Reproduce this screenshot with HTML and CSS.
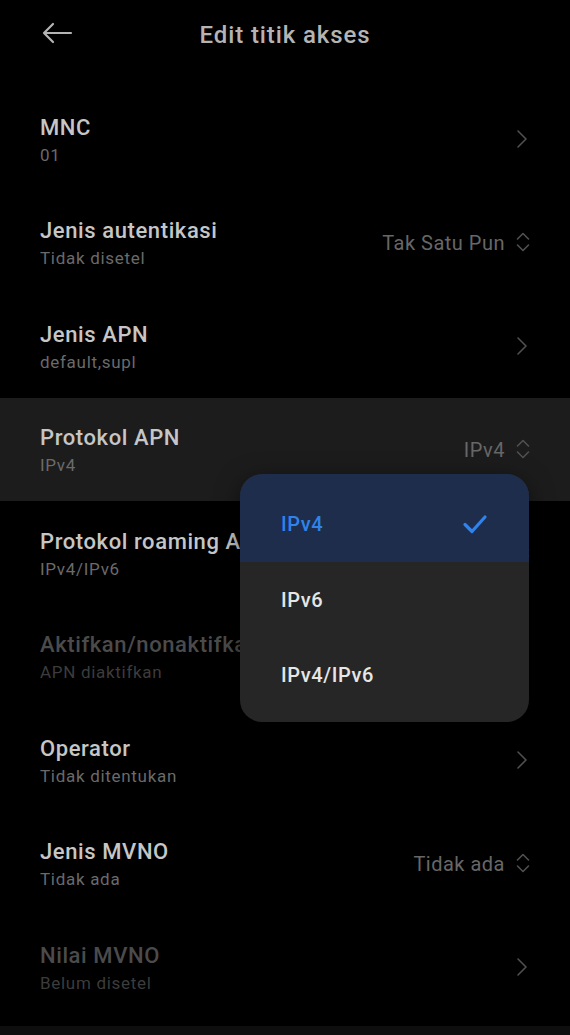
FILE: index.html
```html
<!DOCTYPE html>
<html lang="id">
<head>
    <meta charset="UTF-8">
    <meta name="viewport" content="width=device-width, initial-scale=1.0">
    <title>Edit titik akses</title>
    <link rel="stylesheet" href="styles.css">
</head>
<body>
    <div class="screen">
        <header class="topbar">
            <button class="back" aria-label="Kembali">
                <svg width="32" height="22" viewBox="0 0 32 22">
                    <path d="M30 11H3M12 2L3 11l9 9" fill="none" stroke="currentColor" stroke-width="2.2" stroke-linecap="round" stroke-linejoin="round"/>
                </svg>
            </button>
            <h1>Edit titik akses</h1>
        </header>

        <ul class="prefs">
            <li class="pref">
                <div class="pref-text">
                    <span class="pref-title">MNC</span>
                    <span class="pref-summary">01</span>
                </div>
                <svg class="chevron" width="12" height="22" viewBox="0 0 12 22"><path d="M2 3l8 8-8 8" /></svg>
            </li>
            <li class="pref">
                <div class="pref-text">
                    <span class="pref-title">Jenis autentikasi</span>
                    <span class="pref-summary">Tidak disetel</span>
                </div>
                <span class="pref-value">Tak Satu Pun</span>
                <svg class="updown" width="14" height="24" viewBox="0 0 14 24"><path d="M1.5 9L7 3.5 12.5 9M1.5 15L7 20.5 12.5 15" /></svg>
            </li>
            <li class="pref">
                <div class="pref-text">
                    <span class="pref-title">Jenis APN</span>
                    <span class="pref-summary">default,supl</span>
                </div>
                <svg class="chevron" width="12" height="22" viewBox="0 0 12 22"><path d="M2 3l8 8-8 8" /></svg>
            </li>
            <li class="pref pref--active">
                <div class="pref-text">
                    <span class="pref-title">Protokol APN</span>
                    <span class="pref-summary">IPv4</span>
                </div>
                <span class="pref-value">IPv4</span>
                <svg class="updown" width="14" height="24" viewBox="0 0 14 24"><path d="M1.5 9L7 3.5 12.5 9M1.5 15L7 20.5 12.5 15" /></svg>
            </li>
            <li class="pref">
                <div class="pref-text">
                    <span class="pref-title">Protokol roaming APN</span>
                    <span class="pref-summary">IPv4/IPv6</span>
                </div>
                <span class="pref-value">IPv4/IPv6</span>
                <svg class="updown" width="14" height="24" viewBox="0 0 14 24"><path d="M1.5 9L7 3.5 12.5 9M1.5 15L7 20.5 12.5 15" /></svg>
            </li>
            <li class="pref pref--disabled">
                <div class="pref-text">
                    <span class="pref-title">Aktifkan/nonaktifkan APN</span>
                    <span class="pref-summary">APN diaktifkan</span>
                </div>
            </li>
            <li class="pref">
                <div class="pref-text">
                    <span class="pref-title">Operator</span>
                    <span class="pref-summary">Tidak ditentukan</span>
                </div>
                <svg class="chevron" width="12" height="22" viewBox="0 0 12 22"><path d="M2 3l8 8-8 8" /></svg>
            </li>
            <li class="pref">
                <div class="pref-text">
                    <span class="pref-title">Jenis MVNO</span>
                    <span class="pref-summary">Tidak ada</span>
                </div>
                <span class="pref-value">Tidak ada</span>
                <svg class="updown" width="14" height="24" viewBox="0 0 14 24"><path d="M1.5 9L7 3.5 12.5 9M1.5 15L7 20.5 12.5 15" /></svg>
            </li>
            <li class="pref pref--disabled">
                <div class="pref-text">
                    <span class="pref-title">Nilai MVNO</span>
                    <span class="pref-summary">Belum disetel</span>
                </div>
                <svg class="chevron" width="12" height="22" viewBox="0 0 12 22"><path d="M2 3l8 8-8 8" /></svg>
            </li>
        </ul>

        <div class="navbar"></div>

        <!-- popup list for "Protokol APN" -->
        <ul class="popup">
            <li class="popup-item popup-item--checked">
                <span>IPv4</span>
                <svg width="26" height="22" viewBox="0 0 26 22"><path d="M3 11.5l7 7L23 4" fill="none" stroke="currentColor" stroke-width="3.2" stroke-linecap="round" stroke-linejoin="round"/></svg>
            </li>
            <li class="popup-item"><span>IPv6</span></li>
            <li class="popup-item"><span>IPv4/IPv6</span></li>
        </ul>
    </div>
</body>
</html>
```

FILE: styles.css
```css
* {
    box-sizing: border-box;
}
html, body {
    margin: 0;
    padding: 0;
    background-color: #000;
}
body {
    font-family: Roboto, "Noto Sans", Arial, sans-serif;
    color: #c6c6c6;
    overflow: hidden;
}
.screen {
    position: relative;
    height: 100vh;
    display: flex;
    flex-direction: column;
}

/* top bar */
.topbar {
    position: relative;
    height: 70px;
    flex-shrink: 0;
    display: flex;
    align-items: center;
    justify-content: center;
}
.topbar h1 {
    margin: 0;
    font-size: 24px;
    font-weight: 500;
    letter-spacing: 0.9px;
    color: #b4b4b4;
}
.back {
    position: absolute;
    left: 41px;
    top: 22px;
    padding: 0;
    border: none;
    background: none;
    color: #b4b4b4;
    display: flex;
}

/* preference rows */
.prefs {
    list-style: none;
    margin: 0;
    padding: 17px 0 0;
    flex: 1;
}
.pref {
    height: 103.5px;
    padding: 0 40px;
    display: flex;
    align-items: center;
    gap: 10px;
}
.pref--active {
    background-color: #1c1c1c;
}
.pref-text {
    flex: 1;
    display: flex;
    flex-direction: column;
    padding-top: 4px;
    white-space: nowrap;
    overflow: hidden;
}
.pref-title {
    font-size: 22px;
    font-weight: 500;
    letter-spacing: 0.6px;
    line-height: 29px;
    color: #c6c6c6;
}
.pref-summary {
    font-size: 17px;
    letter-spacing: 0.7px;
    line-height: 27px;
    color: #6a6a6a;
}
.pref--disabled .pref-title {
    color: #4b4b4b;
}
.pref--disabled .pref-summary {
    color: #3c3c3c;
}
.pref-value {
    font-size: 20px;
    letter-spacing: 0.5px;
    color: #676767;
    padding-top: 2px;
}
.chevron path,
.updown path {
    fill: none;
    stroke: #505050;
    stroke-width: 1.6;
    stroke-linecap: round;
    stroke-linejoin: round;
}
.chevron {
    margin-right: 2px;
}
.updown {
    margin-left: 1px;
}

.navbar {
    height: 9px;
    flex-shrink: 0;
    background-color: #0e0e0e;
}

/* dropdown */
.popup {
    position: absolute;
    top: 474px;
    left: 240px;
    width: 289px;
    margin: 0;
    padding: 0 0 10px;
    list-style: none;
    background-color: #262626;
    border-radius: 22px;
    overflow: hidden;
    box-shadow: 0 6px 24px rgba(0, 0, 0, 0.5);
}
.popup-item {
    height: 75px;
    padding: 0 41px;
    display: flex;
    align-items: center;
    justify-content: space-between;
    font-size: 20px;
    font-weight: 500;
    letter-spacing: 0.6px;
    color: #e6e6e6;
}
.popup-item:first-child {
    height: 88px;
    padding-top: 12px;
}
.popup-item--checked {
    background-color: #1e2d4b;
    color: #2f83ea;
}
```
